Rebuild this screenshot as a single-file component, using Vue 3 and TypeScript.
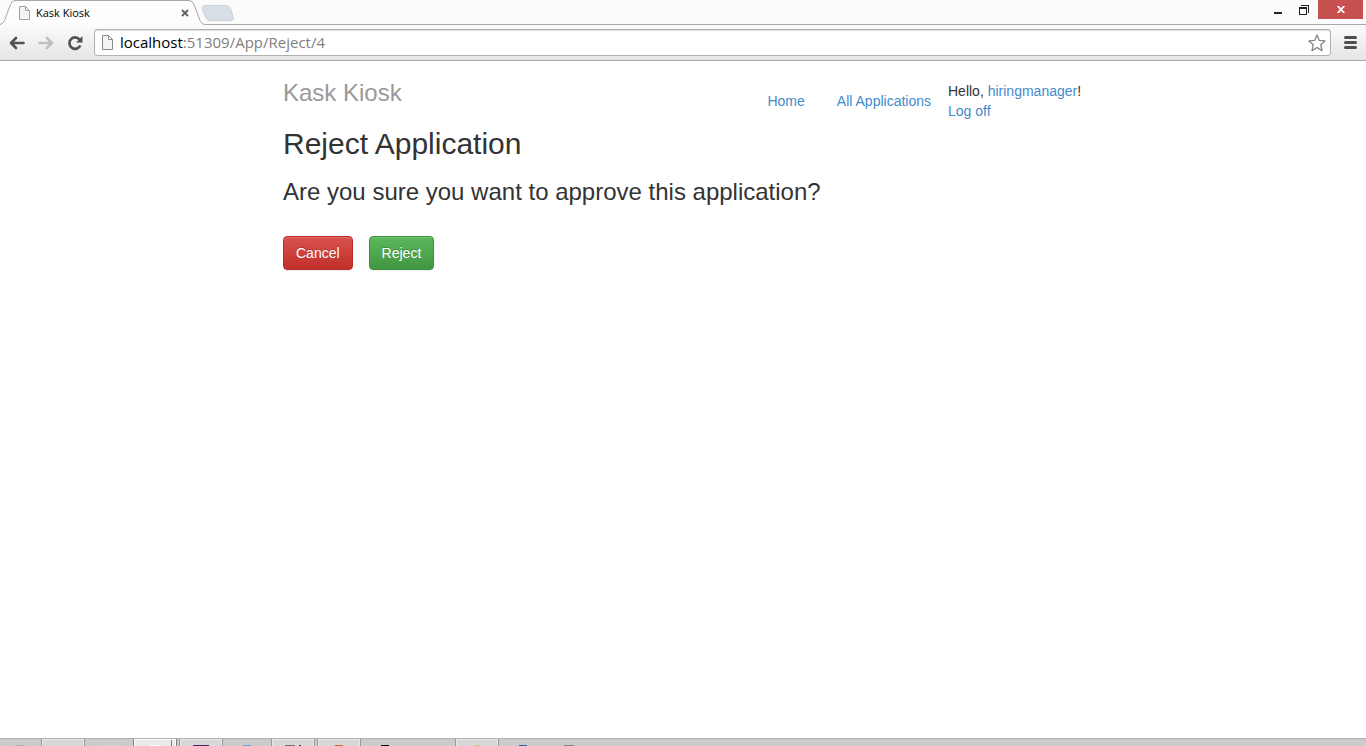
<script setup lang="ts">
import { ref } from 'vue'

interface TaskSlot {
  name: string
  state: 'idle' | 'open' | 'active'
  color: string
  width: number
}

const address = ref('localhost:51309/App/Reject/4')
const [host, rest] = ['localhost', ':51309/App/Reject/4']

const slots: TaskSlot[] = [
  { name: 'Start', state: 'idle', color: '#b0b0b0', width: 10 },
  { name: 'Window 1', state: 'open', color: '#d7d7d7', width: 10 },
  { name: 'Folder', state: 'idle', color: '#d6d4cc', width: 16 },
  { name: 'Browser', state: 'active', color: '#ffffff', width: 10 },
  { name: 'Editor', state: 'open', color: '#4c2170', width: 16 },
  { name: 'Web', state: 'idle', color: '#6fa8cf', width: 8 },
  { name: 'Tools', state: 'open', color: 'linear-gradient(90deg, #707070 10px, #d7d7d7 10px, #d7d7d7 14px, #7a1a1a 14px)', width: 16 },
  { name: 'Media', state: 'open', color: '#d0622f', width: 8 },
  { name: 'Terminal', state: 'idle', color: '#000000', width: 8 },
  { name: 'Store', state: 'idle', color: '#cbcbcb', width: 8 },
  { name: 'Files', state: 'open', color: '#cfc08c', width: 6 },
  { name: 'Documents', state: 'idle', color: '#2d62a8', width: 8 },
  { name: 'Settings', state: 'idle', color: '#808080', width: 10 },
]
</script>

<template>
  <div class="window">
    <header class="chrome">
      <div class="titlebar">
        <div class="tab">
          <svg class="tab-shape" width="236" height="25" viewBox="0 0 236 25" aria-hidden="true">
            <path d="M202.500 9.500Q201.500 5.500 205 5.500H226Q229 5.500 230.500 8.500L233.500 17.500Q234.500 20.500 231 20.500H210Q206.500 20.500 205.500 17.500Z" fill="#d8dee6" stroke="#cdd2d8" />
            <path d="M0 24.500Q3 24 4.500 20.500L10.500 4.500Q12 .5 15 .5H189Q192.500 .5 194 4.500L200 20.500Q201.500 24.500 205 24.500V25H0Z" fill="#fdfdfd" />
            <path d="M0 24.500Q3 24 4.500 20.500L10.500 4.500Q12 .5 15 .5H189Q192.500 .5 194 4.500L200 20.500Q201.500 24.500 205 24.500H236" fill="none" stroke="#a8a8a8" />
          </svg>
          <svg class="file" width="12" height="14" viewBox="0 0 12 14" aria-hidden="true">
            <path d="M.5.5H6.500L10.500 4.500V13.500H.5ZM6.500.5V4.500H10.500" fill="#f4f4f4" stroke="#a0a0a0" />
          </svg>
          <span class="tab-title">Kask Kiosk</span>
          <button class="tab-close" type="button" aria-label="Close tab">
            <svg width="8" height="8" viewBox="0 0 8 8"><path d="M1 1L7 7M7 1L1 7" stroke="#606060" stroke-width="1.800" /></svg>
          </button>
        </div>
        <div class="controls">
          <button class="min" type="button" aria-label="Minimize">
            <svg width="8" height="8" viewBox="0 0 8 8"><path d="M0 5H8V7H0Z" fill="#222" /></svg>
          </button>
          <button class="max" type="button" aria-label="Restore">
            <svg width="10" height="10" viewBox="0 0 10 10"><path d="M2 0H10V8H9V1H2ZM0 2H8V10H0ZM1 4V9H7V4Z" fill="#222" fill-rule="evenodd" /></svg>
          </button>
          <button class="close" type="button" aria-label="Close">
            <svg width="8" height="7" viewBox="0 0 8 7"><path d="M.7 0L7.300 7M7.300 0L.7 7" stroke="#fff" stroke-width="1.800" /></svg>
          </button>
        </div>
      </div>
      <div class="toolbar">
        <button class="nav-button" type="button" aria-label="Back">
          <svg width="16" height="14" viewBox="0 0 16 14"><path d="M7 2L2 7L7 12M2.500 7H14.500" fill="none" stroke="#505050" stroke-width="2.600" stroke-linecap="round" stroke-linejoin="round" /></svg>
        </button>
        <button class="nav-button" type="button" aria-label="Forward">
          <svg width="16" height="14" viewBox="0 0 16 14"><path d="M9 2L14 7L9 12M13.500 7H1.500" fill="none" stroke="#bfbfbf" stroke-width="2.600" stroke-linecap="round" stroke-linejoin="round" /></svg>
        </button>
        <button class="nav-button" type="button" aria-label="Reload">
          <svg width="16" height="16" viewBox="0 0 16 16"><path d="M12.500 4.500A5.700 5.700 0 1 0 13.300 10.500" fill="none" stroke="#505050" stroke-width="2.700" /><path d="M15.500 1V7.500H9Z" fill="#505050" /></svg>
        </button>
        <div class="omnibox">
          <svg width="12" height="15" viewBox="0 0 12 15" aria-hidden="true">
            <path d="M.5.5H6.500L10.500 4.500V14.500H.5ZM6.500.5V4.500H10.500" fill="#f4f4f4" stroke="#8a8a8a" />
          </svg>
          <label class="address">
            <span class="address-text" aria-hidden="true">{{ host }}<span class="path">{{ rest }}</span></span>
            <input v-model="address" type="text" aria-label="Address" />
          </label>
          <button class="star" type="button" aria-label="Bookmark this page">
            <svg width="18" height="18" viewBox="0 0 18 18"><path d="M9 1L11.300 6.400L17 6.900L12.700 10.700L14 16.600L9 13.500L4 16.600L5.300 10.700L1 6.900L6.700 6.400Z" fill="#fff" stroke="#858585" stroke-width="1.300" stroke-linejoin="round" /></svg>
          </button>
        </div>
        <button class="menu" type="button" aria-label="Menu">
          <svg width="13" height="13" viewBox="0 0 13 13"><path d="M1.500 1.500H11.500M1.500 6.500H11.500M1.500 11.500H11.500" stroke="#505050" stroke-width="3" stroke-linecap="round" /></svg>
        </button>
      </div>
    </header>

    <main class="page">
      <div class="container">
        <div class="site-header">
          <a class="brand" href="#">Kask Kiosk</a>
          <nav class="links">
            <a href="#">Home</a>
            <a href="#">All Applications</a>
          </nav>
          <div class="account">
            <div>Hello, <a href="#">hiringmanager</a>!</div>
            <a href="#">Log off</a>
          </div>
        </div>
        <h2>Reject Application</h2>
        <h3>Are you sure you want to approve this application?</h3>
        <div class="actions">
          <button class="btn danger" type="button">Cancel</button>
          <button class="btn success" type="button">Reject</button>
        </div>
      </div>
    </main>

    <footer class="taskbar">
      <button v-for="slot in slots" :key="slot.name" type="button" class="slot" :class="slot.state" :aria-label="slot.name">
        <span class="slot-icon" :style="{ width: slot.width + 'px', background: slot.color }"></span>
      </button>
    </footer>
  </div>
</template>

<style>
body {
  margin: 0;
  background: #fff;
}
</style>

<style scoped>
.window {
  display: flex;
  flex-direction: column;
  height: 100vh;
  overflow: hidden;
  font-family: "Liberation Sans", Arial, sans-serif;
  font-size: 14px;
  line-height: 20px;
  color: #333;
}
button {
  margin: 0;
  padding: 0;
  border: 0;
  background: none;
  font: inherit;
}
svg {
  display: block;
  flex: none;
}
.chrome {
  flex: none;
  font-family: "Open Sans", "Noto Sans", sans-serif;
}
.titlebar {
  display: flex;
  justify-content: space-between;
  height: 25px;
  background: linear-gradient(#a8a8a8, #a8a8a8) bottom / 100% 1px no-repeat #fbfbfb;
}
.tab {
  position: relative;
  display: flex;
  align-items: center;
  box-sizing: border-box;
  width: 236px;
  padding: 1px 47px 0 19px;
}
.tab-shape {
  position: absolute;
  left: 0;
  top: 0;
}
.file,
.tab-title,
.tab-close {
  position: relative;
}
.tab-title {
  flex: 1;
  margin-left: 5px;
  font-size: 11px;
  color: #000;
}
.controls {
  display: flex;
  height: 19px;
  padding-right: 3px;
}
.controls button {
  display: flex;
  justify-content: center;
  align-items: center;
  width: 26px;
}
.controls .min {
  padding-top: 3px;
}
.controls .close {
  width: 45px;
  margin-left: 1px;
  background: #c75050;
}
.toolbar {
  display: flex;
  align-items: center;
  box-sizing: border-box;
  height: 36px;
  padding: 0 9px 0 2px;
  border-bottom: 1px solid #a9a9a9;
  background: linear-gradient(#fbfbfb, #e5e5e5);
}
.nav-button {
  display: flex;
  justify-content: center;
  width: 29px;
}
.omnibox {
  display: flex;
  flex: 1;
  align-items: center;
  box-sizing: border-box;
  height: 27px;
  margin-left: 5px;
  padding: 0 4px 0 7px;
  border: 1px solid #b2b2b2;
  border-radius: 3px;
  background: #fff;
  box-shadow: inset 0 1px 1px #ddd;
}
.address {
  position: relative;
  flex: 1;
  margin-left: 6px;
  padding-bottom: 2px;
  font-size: 15px;
  color: #000;
}
.address-text {
  display: block;
}
.path {
  color: #808080;
}
.address input {
  position: absolute;
  inset: 0;
  box-sizing: border-box;
  width: 100%;
  padding: 0;
  border: 0;
  outline: 0;
  background: transparent;
  font: inherit;
  color: transparent;
  caret-color: #000;
}
.menu {
  margin-left: 13px;
}
.page {
  flex: 1;
  min-height: 0;
}
.container {
  max-width: 800px;
  margin: 0 auto;
}
.site-header {
  display: flex;
  align-items: flex-start;
  padding-top: 20px;
}
a {
  color: #428bca;
  text-decoration: none;
}
.brand {
  flex: 1;
  font-size: 24px;
  line-height: 24px;
  color: #999;
}
.links {
  display: flex;
  gap: 32px;
  padding-top: 10px;
}
.account {
  width: 135px;
  margin-left: 17px;
  white-space: nowrap;
}
h2,
h3 {
  margin: 0;
  font-weight: 500;
}
h2 {
  margin-top: 6px;
  font-size: 30px;
  line-height: 33px;
}
h3 {
  margin-top: 19px;
  font-size: 24px;
  line-height: 26px;
}
.actions {
  display: flex;
  gap: 16px;
  margin-top: 31px;
}
.btn {
  padding: 6px 12px;
  border: 1px solid;
  border-radius: 4px;
  color: #fff;
  text-shadow: 0 -1px 0 rgba(0, 0, 0, 0.2);
  box-shadow: inset 0 1px 0 rgba(255, 255, 255, 0.15), 0 1px 1px rgba(0, 0, 0, 0.075);
}
.danger {
  border-color: #b92c28;
  background: linear-gradient(#d9534f, #c12e2a);
}
.success {
  border-color: #3e8f3e;
  background: linear-gradient(#5cb85c, #419641);
}
.taskbar {
  display: flex;
  flex: none;
  gap: 2px;
  box-sizing: border-box;
  height: 8px;
  border-top: 1px solid #b0b0b0;
  background: #cbcbcb;
  overflow: hidden;
}
.slot {
  display: flex;
  justify-content: center;
  align-items: flex-end;
  box-sizing: border-box;
  flex: none;
  width: 44px;
  height: 7px;
}
.slot:first-child {
  width: 39px;
}
.slot.open {
  border: solid #999;
  border-width: 0 1px;
  background: #d7d7d7;
  box-shadow: inset 0 1px 0 #e8e8e8, inset 1px 0 0 #e8e8e8, inset -1px 0 0 #e8e8e8;
}
.slot.active {
  border: solid #808080;
  border-width: 0 1px;
  background: linear-gradient(90deg, transparent 37px, #808080 37px, #808080 38px, transparent 38px) #e9e9e9;
  box-shadow: inset 0 1px 0 #fff, inset 1px 0 0 #fff, inset -1px 0 0 #fff;
}
.slot-icon {
  height: 1px;
}
</style>
